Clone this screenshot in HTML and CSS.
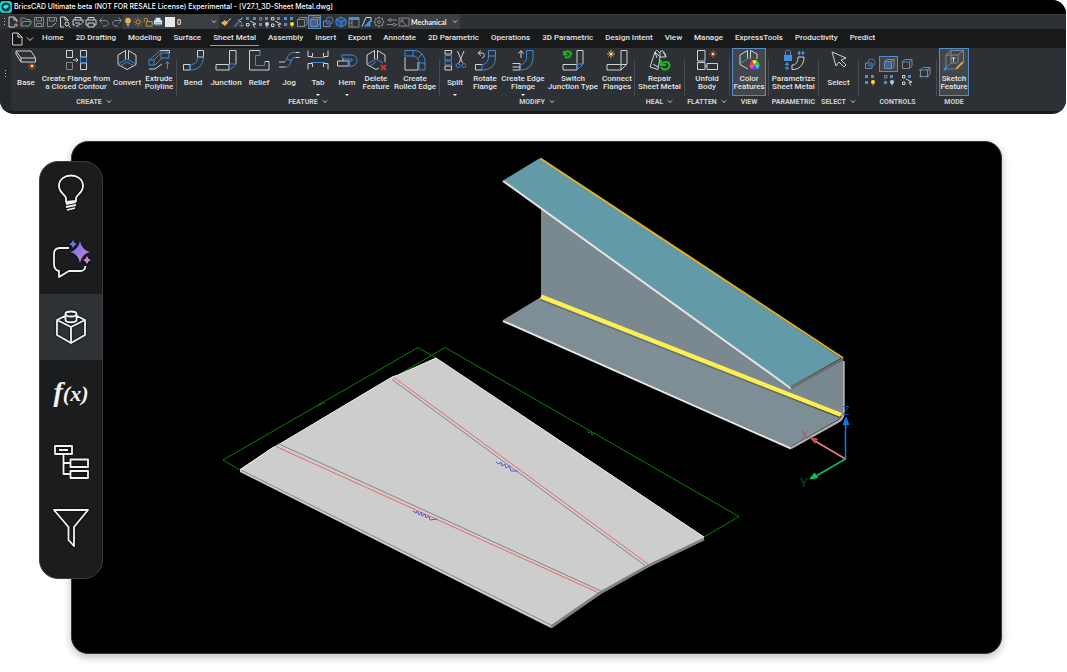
FILE: index.html
```html
<!DOCTYPE html>
<html lang="en">
<head>
<meta charset="utf-8">
<title>BricsCAD Ultimate</title>
<link rel="stylesheet" href="styles.css">
</head>
<body>
<svg class="sprite" aria-hidden="true">
  <defs>
    <linearGradient id="spark" x1="0" y1="0" x2="1" y2="1"><stop offset="0.1" stop-color="#4f7be8"/><stop offset="0.5" stop-color="#9a7bdc"/><stop offset="1" stop-color="#f08ad8"/></linearGradient>
    <symbol id="star" viewBox="0 0 8 8"><path class="star" d="M4 0V8M0 4H8M1.4 1.4L6.6 6.6M6.6 1.4L1.4 6.6"/><circle class="core" cx="4" cy="4" r="1.2"/></symbol>

    <symbol id="i-base" viewBox="0 0 22 22"><path class="w" d="M1 2H16L20.500 9V13H6L1 5ZM1 2L6 9H20.500M6 9V13"/><use href="#star" x="13" y="13" width="8" height="8"/></symbol>
    <symbol id="i-flange" viewBox="0 0 22 22"><path class="g" d="M1.500 13.500H7.500V20.500H1.500Z"/><path class="w" d="M1.500 1.500H7.500V8.500H1.500ZM15.500 1.500H21.500V8H15.500ZM15.500 14H21.500V20.500H15.500ZM8 11H13M11 9L13 11L11 13"/><path class="b" d="M15.500 8H21.500V14H15.500Z"/></symbol>
    <symbol id="i-convert" viewBox="0 0 22 22"><path class="w" d="M9.500 1.500L2 6V15.500L11 20.500L20 15.500V6L12.500 1.500V10.500M9.500 1.500V10.500"/><path class="b" d="M11 10L3 14.500M11 10L19 14.500M11 13L4 17M11 13L18 17"/></symbol>
    <symbol id="i-extrude" viewBox="0 0 22 22"><path class="b" d="M1 11H6L13 4H21V9H14L7 16H1ZM6 11V16M13 4V9M21 4L17 1.500H12L5 8L1 11M19.500 20V13M17.500 15L19.500 12.500L21.500 15"/><path class="w" d="M1 20H7L14 15M12 2L16 1.500H21.500V4"/></symbol>
    <symbol id="i-bend" viewBox="0 0 22 22"><path class="w" d="M1.500 15.500H8V21H1.500ZM15.500 1.500H21.500V8H15.500Z"/><path class="b" d="M8 15.500C13 15.500 15.500 13 15.500 8H21.500C21.500 16 16 21 8 21Z"/></symbol>
    <symbol id="i-junction" viewBox="0 0 22 22"><path class="w" d="M1 15.500H14V21H1ZM14.500 15V1.500H21V15"/><path class="b" d="M14.500 15H21V15.500L14.500 21"/></symbol>
    <symbol id="i-relief" viewBox="0 0 22 22"><path class="w" d="M12 1.500H1.500V21H21V12.500H17"/><path class="b" d="M12 1.500V6.500H7.500V16.500H16.500V12.500"/></symbol>
    <symbol id="i-jog" viewBox="0 0 22 22"><path class="w" d="M7 13H1M7 18H1M16 3.500H21.500M16 8.500H21.500"/><path class="b" d="M5 13C10 13 8 3.500 16 3.500H18M5 18H8C14 18 11 8.500 17 8.500H18M9 10L14 12"/></symbol>
    <symbol id="i-tab" viewBox="0 0 22 22"><path class="w" d="M1 1.500V7.500H5.500V4M21 1.500V7.500H16.500V4M1 20.500V14.500H5.500V18M21 20.500V14.500H16.500V18"/><path class="b" d="M4 8.500H18M4 13.500H18"/></symbol>
    <symbol id="i-hem" viewBox="0 0 22 22"><path class="w" d="M1.500 12H13V17H1.500ZM7 12V9"/><path class="b" d="M6 9V6H15C23 6 23 17 15 17H12V12H15C17 12 17 10 15 10H6"/></symbol>
    <symbol id="i-delete" viewBox="0 0 22 22"><path class="w" d="M9.500 1.500L2 6V15.500L11 20.500L14 19M12.500 1.500L20 6V13M9.500 1.500V10M12.500 1.500V10"/><path class="b" d="M11 10L3 14.500M11 10L18 14M11 13L5 17"/><path class="r" d="M16 16L21 21M21 16L16 21"/></symbol>
    <symbol id="i-rolled" viewBox="0 0 22 22"><path class="w" d="M1 8V21H14V13"/><path class="b" d="M1 7V1.500H9C17 1.500 21 7 21 13V21H15V14C15 10 12 7 9 7H1M9 1.500V7M15 14H21M14 9L18 5"/></symbol>
    <symbol id="i-split" viewBox="0 0 22 22"><path class="w" d="M1 1.500H7.500V5H1ZM1 17H7.500V21H1ZM13.500 2L18.500 14M20 2L15 14"/><path class="b" d="M1 6.500H7.500V11H1ZM1 12H7.500V16H1Z"/><circle class="b" cx="14" cy="16.500" r="2"/><circle class="b" cx="20" cy="16.500" r="2"/></symbol>
    <symbol id="i-rotate" viewBox="0 0 22 22"><path class="w" d="M8 15.500H1.500V21H8M5 4H8C11 4 11 8.500 8 9M7 1.500L4 4L7 6.500"/><path class="b" d="M8 21V15.500C12 15.500 14.500 12 14.500 8V1.500H21.500V8C21.500 16 17 21 8 21ZM14.500 7H21.500"/></symbol>
    <symbol id="i-edge" viewBox="0 0 22 22"><path class="w" d="M0.500 14.500H8V21H0.500M9 9V2M6.500 4.500L9 1.500L11.500 4.500M0.500 18H8"/><path class="b" d="M8 15.500C12 15.500 14.500 12 14.500 8V1.500H21V8C21 16 17 21 8 21"/></symbol>
    <symbol id="i-switch" viewBox="0 0 22 22"><path class="w" d="M1 15.500H15V21H1ZM15 14V1.500H21V15"/><path class="b" d="M15 14V21L21 15H15"/><path class="n" d="M2 2V5.500H5.500M2.500 5C4 1 9 2 9 5S5 9.500 3 7.500"/></symbol>
    <symbol id="i-connect" viewBox="0 0 22 22"><path class="w" d="M1 15.500H15V21H1ZM15 15.500V1.500H21V15L15 21M15 15.500H21"/><use class="gold" href="#star" x="1" y="1" width="8" height="8"/></symbol>
    <symbol id="i-repair" viewBox="0 0 22 22"><path class="w" d="M6 3L1 18L9 20.500L11 8ZM8 9L6 3C8 0 10 2 10 4M11 8V3C14 0 16 3 17 8ZM14 3L17 8M4 15L9 18"/><path class="n" d="M12 11V16H17M12.500 15.500C15 11 21 13 20.500 17S14 22 12 18"/></symbol>
    <symbol id="i-unfold" viewBox="0 0 22 22"><path class="w" d="M1.500 1.500H9V12H1.500ZM1.500 13.500H9V20.500H1.500ZM11 14.500H21.500V20.500H11ZM9 17H11"/><use href="#star" x="13" y="1" width="8" height="8"/></symbol>
    <symbol id="i-color" viewBox="0 0 22 22"><path class="w" d="M9.500 1.500L2 6V15.500L10 20M12.500 1.500L19 5V10M9.500 1.500V9M12.500 1.500V9"/><path class="b" d="M11 9L3 14M11 9L14 11"/><path fill="#f33" d="M16.500 16L11.500 16A5 5 0 0 1 14 11.700Z"/><path fill="#ee3" d="M16.500 16L14 11.700A5 5 0 0 1 19 11.700Z"/><path fill="#3c3" d="M16.500 16L19 11.700A5 5 0 0 1 21.500 16Z"/><path fill="#2cf" d="M16.500 16H21.500A5 5 0 0 1 19 20.300Z"/><path fill="#35f" d="M16.500 16L19 20.300A5 5 0 0 1 14 20.300Z"/><path fill="#f4c" d="M16.500 16L14 20.300A5 5 0 0 1 11.500 16Z"/></symbol>
    <symbol id="i-param" viewBox="0 0 22 22"><path class="w" d="M9 16V20.500C16 21 21 16 21 8H15C15 13 13 16 9 16Z"/><path class="bf" d="M1 6H9V12H1ZM14 4L17 1.500V6.500ZM22 4L19 1.500V6.500ZM4 13L1.500 16H6.500ZM4 21L1.500 18.500H6.500Z"/><path class="b" d="M2.500 6V3C2.500 0.500 7.500 0.500 7.500 3V6M15 4H21M4 15V19"/></symbol>
    <symbol id="i-select" viewBox="0 0 22 22"><path class="w" d="M4 3L18 9L13 11L18 16L16 18L11 13L8 17Z"/></symbol>
    <symbol id="i-sketch" viewBox="0 0 22 22"><path class="g" d="M8 1.500H20.500L15 6H3ZM3 6V19M15 6V14M20.500 1.500V13M8 1.500V14L3 19M8 14H14"/><path class="w" d="M10.500 13V8.500M8.500 10L10.500 8L12.500 10"/><path class="b" d="M8 14L2 20H12"/><circle class="bf" cx="2" cy="20" r="1.500"/><path class="pencil" d="M13 20L20 13"/></symbol>

    <symbol id="q-new" viewBox="0 0 12 12"><path class="w" d="M8 11H2V1H7L10 4V6M7 1V4H10"/><path class="y" d="M9 7V11M7 9H11"/></symbol>
    <symbol id="q-open" viewBox="0 0 12 12"><path class="g" d="M1 10V2H5L6 3.500H10V5M1 10L3 5.500H11.500L9 10Z"/><path class="leaf" d="M8 10.500L11 7.500"/></symbol>
    <symbol id="q-save" viewBox="0 0 12 12"><path class="g" d="M1.500 1.500H10.500V10.500H1.500ZM3.500 1.500V5H8.500V1.500M3.500 10.500V7.500H8.500V10.500"/></symbol>
    <symbol id="q-saveas" viewBox="0 0 12 12"><path class="g" d="M6 10.500H1.500V1.500H10.500V6M3.500 1.500V5H8.500V1.500"/><path class="y" d="M6 10L10 7"/></symbol>
    <symbol id="q-preview" viewBox="0 0 12 12"><path class="w" d="M5 11H1.500V1H6L9 4V5M6 1V4H9"/><circle class="w" cx="8" cy="8" r="2"/><path class="w" d="M9.500 9.500L11.500 11.500"/></symbol>
    <symbol id="q-print" viewBox="0 0 12 12"><path class="w" d="M3 4V1.500H9V4M3 9H1V4H11V9H9M3 7H9V11H3Z"/></symbol>
    <symbol id="q-plot" viewBox="0 0 12 12"><path class="w" d="M3 4V1.500H9V4M3 9H1V4H11V7M3 7H8"/><path class="y" d="M4 10L10 7.500"/><path class="b" d="M4 10.500H7"/></symbol>
    <symbol id="q-undo" viewBox="0 0 12 12"><path class="g" d="M4.500 1.500L1.500 4.500L4.500 7.500M1.500 4.500H7C11.500 4.500 11.500 10 7 10H5"/></symbol>
    <symbol id="q-redo" viewBox="0 0 12 12"><path class="g" d="M7.500 1.500L10.500 4.500L7.500 7.500M10.500 4.500H5C0.500 4.500 0.500 10 5 10H7"/></symbol>
    <symbol id="q-bulb" viewBox="0 0 12 12"><circle class="yf" cx="6" cy="4.500" r="3.500"/><path class="w" d="M4.500 9H7.500M5 11H7"/></symbol>
    <symbol id="q-sun" viewBox="0 0 12 12"><circle class="y" cx="6" cy="6" r="2.500"/><path class="y" d="M6 0.500V2M6 10V11.500M0.500 6H2M10 6H11.500M2 2L3 3M9 9L10 10M10 2L9 3M3 9L2 10"/></symbol>
    <symbol id="q-lock" viewBox="0 0 12 12"><path class="y" d="M4 5.500H11V11H4ZM5.500 5V3C5.500 1 1.500 1 1.500 3V6"/></symbol>
    <symbol id="q-layprint" viewBox="0 0 12 12"><path fill="#dfe7f2" d="M1 4H11V9H1ZM3 1H9V4H3Z"/><path class="b" d="M2 7H10M3 10H9"/></symbol>
    <symbol id="q-brush" viewBox="0 0 12 12"><path class="yf" d="M1 7L5 4L8 7L5 10Z"/><path class="w" d="M7 6L11 2.500"/></symbol>
    <symbol id="q-drop" viewBox="0 0 12 12"><path class="b" d="M1.500 10.500L7 4.500M3 11L8 5.500"/><path class="w" d="M6.500 3.500L9.500 6.500M8.500 4L10.500 1.500"/><path class="leaf" d="M9.500 7V11.500M7 9.500H12"/></symbol>
    <symbol id="q-gridsel" viewBox="0 0 12 12"><path class="bf" d="M1 1H4V4H1ZM8 1H11V4H8Z"/><path class="w" d="M1.500 7.500H4V10H1.500ZM5 5L11 8L8 8.500L10 11.500"/></symbol>
    <symbol id="q-gridoff" viewBox="0 0 12 12"><path class="g" d="M1.500 1.500H4V4H1.500Z"/><path class="bf" d="M7 1H10V4H7ZM1 7H4V10H1Z"/><circle fill="#c8ccd0" cx="9" cy="8" r="2"/><path class="w" d="M9 9V11.500"/></symbol>
    <symbol id="q-gridpick" viewBox="0 0 12 12"><path class="bf" d="M7 1H10V4H7Z"/><path class="w" d="M1.500 1.500H4V4H1.500ZM1.500 8H4V10.500H1.500ZM5 5L11 8L8 8.500L10 11.500"/></symbol>
    <symbol id="q-gridon" viewBox="0 0 12 12"><path class="bf" d="M1 1H4V4H1ZM7 1H10V4H7ZM1 7H4V10H1Z"/><circle fill="#ffe22e" cx="9" cy="8" r="2"/><path class="y" d="M9 9V11.500"/></symbol>
    <symbol id="q-cube" viewBox="0 0 12 12"><path class="g" d="M1.500 3.500H8.500V10.500H1.500ZM1.500 3.500L4 1.500H11L8.500 3.500M11 1.500V8L8.500 10.500"/></symbol>
    <symbol id="q-cubeedge" viewBox="0 0 12 12"><path class="g" d="M1.500 3.500V10.500H8.500V3.500M1.500 3.500L4 1.500H11M11 1.500V8L8.500 10.500"/><path class="b" d="M1.500 4H8.500L11 1.500"/></symbol>
    <symbol id="q-cubeblue" viewBox="0 0 12 12"><path fill="#3665a5" d="M1.500 3.500H8.500V10.500H1.500Z"/><path class="g" d="M1.500 3.500H8.500V10.500H1.500ZM1.500 3.500L4 1.500H11L8.500 3.500M11 1.500V8L8.500 10.500"/></symbol>
    <symbol id="q-circles" viewBox="0 0 12 12"><circle fill="none" stroke="#60789a" cx="7.500" cy="4.500" r="3.500"/><path class="g" d="M1.500 5H8V10.500H1.500Z"/><circle fill="#2c62a6" cx="6" cy="6.500" r="2.500"/></symbol>
    <symbol id="q-hex" viewBox="0 0 12 12"><path fill="#245083" d="M6 1L11 3.500V8.500L6 11L1 8.500V3.500Z"/><path class="b" d="M6 1L11 3.500V8.500L6 11L1 8.500V3.500ZM1 3.500L6 6L11 3.500M6 6V11"/></symbol>
    <symbol id="q-table" viewBox="0 0 12 12"><path class="g" d="M1 1.500H11V11H1ZM4 4V11M1 7H4"/><path class="bf" d="M1 1H11V4H1Z"/></symbol>
    <symbol id="q-page" viewBox="0 0 12 12"><path class="w" d="M1 10.500L5 1.500H10V6"/><path class="bf" d="M3 10.500L9.500 3.500V10.500Z"/></symbol>
    <symbol id="q-gear" viewBox="0 0 12 12"><circle class="g" cx="6" cy="6" r="4.200"/><circle class="g" cx="6" cy="6" r="1.500"/><path class="g" d="M6 0.500V2M6 10V11.500M0.500 6H2M10 6H11.500M2 2L3 3M9 9L10 10M10 2L9 3M3 9L2 10"/></symbol>
    <symbol id="q-sliders" viewBox="0 0 12 12"><path class="g" d="M1 4H3M5.500 4H11M1 8.500H7M9.500 8.500H11"/><circle class="g" cx="4.200" cy="4" r="1.300"/><circle class="g" cx="8.200" cy="8.500" r="1.300"/></symbol>
    <symbol id="q-ws" viewBox="0 0 12 12"><path class="g" d="M1 2H11V10H1ZM3 4L8 9M3 4V7M3 4H6"/></symbol>
    <symbol id="q-box" viewBox="0 0 12 12"><path class="g" d="M1.500 4H8.500V10.500H1.500ZM1.500 4L4 1.500H11L8.500 4M11 1.500V8L8.500 10.500"/><path class="bf" d="M0.500 3H2.500V5H0.500ZM7.500 3H9.500V5H7.500ZM0.500 9.500H2.500V11.500H0.500ZM7.500 9.500H9.500V11.500H7.500Z"/></symbol>
    <symbol id="chev" viewBox="0 0 6 4"><path class="chevline" d="M1 0.500L3 2.500L5 0.500"/></symbol>
  </defs>
</svg>

<header class="app">
  <div class="titlebar">
    <svg class="logo" viewBox="0 0 12 12"><rect width="12" height="12" rx="3" fill="#19cfd2"/><circle cx="6" cy="6" r="4.500" fill="#07393f"/><path d="M3 6.500C4 3 8 3 9 5.500L6 8Z" fill="#2fe3e0"/></svg>
    <span>BricsCAD Ultimate beta (NOT FOR RESALE License) Experimental - [V27.1_3D-Sheet Metal.dwg]</span>
  </div>

  <div class="quick">
    <span class="grip"></span>
    <button aria-label="New"><svg><use href="#q-new"/></svg></button>
    <button aria-label="Open"><svg><use href="#q-open"/></svg></button>
    <button aria-label="Save"><svg><use href="#q-save"/></svg></button>
    <button aria-label="Save as"><svg><use href="#q-saveas"/></svg></button>
    <button aria-label="Print preview"><svg><use href="#q-preview"/></svg></button>
    <button aria-label="Plot"><svg><use href="#q-plot"/></svg></button>
    <button aria-label="Print"><svg><use href="#q-print"/></svg></button>
    <button aria-label="Undo"><svg><use href="#q-undo"/></svg></button>
    <button aria-label="Redo"><svg><use href="#q-redo"/></svg></button>
    <div class="combo layer">
      <svg class="lay"><use href="#q-bulb"/></svg><svg class="lay"><use href="#q-sun"/></svg><svg class="lay"><use href="#q-lock"/></svg><svg class="lay"><use href="#q-layprint"/></svg>
      <span class="swatch"></span>
      <select aria-label="Layer"><option>0</option></select>
      <svg class="chev"><use href="#chev"/></svg>
    </div>
    <button aria-label="Match properties"><svg><use href="#q-brush"/></svg></button>
    <button class="tight" aria-label="Pick properties"><svg><use href="#q-drop"/></svg></button>
    <button aria-label="Isolate"><svg><use href="#q-gridsel"/></svg></button>
    <button aria-label="Hide"><svg><use href="#q-gridoff"/></svg></button>
    <button class="tight" aria-label="Select similar"><svg><use href="#q-gridpick"/></svg></button>
    <button aria-label="Show all"><svg><use href="#q-gridon"/></svg></button>
    <button aria-label="Wireframe"><svg><use href="#q-cube"/></svg></button>
    <button class="on" aria-label="Faces"><svg><use href="#q-cubeblue"/></svg></button>
    <button aria-label="Boundaries"><svg><use href="#q-circles"/></svg></button>
    <button aria-label="Solids"><svg><use href="#q-hex"/></svg></button>
    <button aria-label="Properties"><svg><use href="#q-table"/></svg></button>
    <button aria-label="Sheets"><svg><use href="#q-page"/></svg></button>
    <button class="tight" aria-label="Settings"><svg><use href="#q-gear"/></svg></button>
    <button aria-label="Options"><svg><use href="#q-sliders"/></svg></button>
    <button class="tight" aria-label="Workspace"><svg><use href="#q-ws"/></svg></button>
    <div class="combo workspace">
      <select aria-label="Workspace name"><option>Mechanical</option></select>
      <svg class="chev"><use href="#chev"/></svg>
    </div>
  </div>

  <div class="lower">
    <div class="dock"><span class="grip"></span></div>
    <div class="ribbon">
      <nav class="tabs">
        <button class="file" aria-label="File"><svg viewBox="0 0 26 14"><path class="w" d="M1.500 1H7L11 5V13H1.500ZM7 1V5H11"/><path class="w" d="M16 5.500L19 8.500L22 5.500"/></svg></button>
        <a href="#">Home</a><a href="#">2D Drafting</a><a href="#">Modeling</a><a href="#">Surface</a><a class="current" href="#">Sheet Metal</a><a href="#">Assembly</a><a href="#">Insert</a><a href="#">Export</a><a href="#">Annotate</a><a href="#">2D Parametric</a><a href="#">Operations</a><a href="#">3D Parametric</a><a href="#">Design Intent</a><a href="#">View</a><a href="#">Manage</a><a href="#">ExpressTools</a><a href="#">Productivity</a><a href="#">Predict</a>
      </nav>
      <div class="groups">
        <section class="group">
          <div class="tools create">
            <button><svg><use href="#i-base"/></svg><span>Base</span></button>
            <button><svg><use href="#i-flange"/></svg><span>Create Flange from<br>a Closed Contour</span></button>
            <button><svg><use href="#i-convert"/></svg><span>Convert</span></button>
            <button><svg><use href="#i-extrude"/></svg><span>Extrude<br>Polyline</span></button>
          </div>
          <h2>CREATE <svg class="chev"><use href="#chev"/></svg></h2>
        </section>
        <section class="group">
          <div class="tools feature">
            <button><svg><use href="#i-bend"/></svg><span>Bend</span></button>
            <button><svg><use href="#i-junction"/></svg><span>Junction</span></button>
            <button><svg><use href="#i-relief"/></svg><span>Relief</span></button>
            <button><svg><use href="#i-jog"/></svg><span>Jog</span></button>
            <button class="more"><svg><use href="#i-tab"/></svg><span>Tab</span></button>
            <button class="more"><svg><use href="#i-hem"/></svg><span>Hem</span></button>
            <button><svg><use href="#i-delete"/></svg><span>Delete<br>Feature</span></button>
            <button><svg><use href="#i-rolled"/></svg><span>Create<br>Rolled Edge</span></button>
          </div>
          <h2>FEATURE <svg class="chev"><use href="#chev"/></svg></h2>
        </section>
        <section class="group">
          <div class="tools modify">
            <button class="more"><svg><use href="#i-split"/></svg><span>Split</span></button>
            <button><svg><use href="#i-rotate"/></svg><span>Rotate<br>Flange</span></button>
            <button class="more"><svg><use href="#i-edge"/></svg><span>Create Edge<br>Flange</span></button>
            <button><svg><use href="#i-switch"/></svg><span>Switch<br>Junction Type</span></button>
            <button><svg><use href="#i-connect"/></svg><span>Connect<br>Flanges</span></button>
          </div>
          <h2>MODIFY <svg class="chev"><use href="#chev"/></svg></h2>
        </section>
        <section class="group">
          <div class="tools wide"><button><svg><use href="#i-repair"/></svg><span>Repair<br>Sheet Metal</span></button></div>
          <h2>HEAL <svg class="chev"><use href="#chev"/></svg></h2>
        </section>
        <section class="group">
          <div class="tools mid"><button><svg><use href="#i-unfold"/></svg><span>Unfold<br>Body</span></button></div>
          <h2>FLATTEN <svg class="chev"><use href="#chev"/></svg></h2>
        </section>
        <section class="group">
          <div class="tools color"><button class="on"><svg><use href="#i-color"/></svg><span>Color<br>Features</span></button></div>
          <h2>VIEW</h2>
        </section>
        <section class="group">
          <div class="tools wide"><button><svg><use href="#i-param"/></svg><span>Parametrize<br>Sheet Metal</span></button></div>
          <h2>PARAMETRIC</h2>
        </section>
        <section class="group">
          <div class="tools narrow"><button><svg><use href="#i-select"/></svg><span>Select</span></button></div>
          <h2>SELECT <svg class="chev"><use href="#chev"/></svg></h2>
        </section>
        <section class="group">
          <div class="controls">
            <div class="matrix">
              <button aria-label="Boundary mode"><svg><use href="#q-circles"/></svg></button>
              <button class="on" aria-label="Face mode"><svg><use href="#q-cubeblue"/></svg></button>
              <button aria-label="Edge mode"><svg><use href="#q-cubeedge"/></svg></button>
              <button aria-label="Show entities"><svg><use href="#q-gridon"/></svg></button>
              <button aria-label="Hide entities"><svg><use href="#q-gridoff"/></svg></button>
              <button aria-label="Isolate entities"><svg><use href="#q-gridpick"/></svg></button>
            </div>
            <button aria-label="Vertices"><svg><use href="#q-box"/></svg></button>
          </div>
          <h2>CONTROLS</h2>
        </section>
        <section class="group last">
          <div class="tools mode"><button class="on"><svg><use href="#i-sketch"/></svg><span>Sketch<br>Feature</span></button></div>
          <h2>MODE</h2>
        </section>
      </div>
    </div>
  </div>
</header>

<main class="stage">
  <div class="viewport">
    <svg class="drawing" viewBox="72 142 929 511" role="img" aria-label="Sheet metal part and its unfolded plate">
      <g class="dim">
        <path d="M240 470L223 460L418 347.500L436 358M398 375L445 347.500L739 516.500L704 537"/>
        <path d="M318 406L320 403L321 405L323 402L325 404M587 431L589 433L591 431L592 435L595 433"/>
      </g>
      <path fill="#cdcdcd" d="M436 358L704 537V540L648 567L600 594L551 628L240 472V469L272 448L278 445L392 377L398 375Z"/>
      <path fill="none" stroke="#efefef" d="M240 470L272 448L278 445L392 377L398 375L436 358L704 537"/>
      <path fill="none" stroke="#858585" d="M241 470L551 625"/>
      <path fill="none" stroke="#818181" stroke-width="3" d="M551 627L600 593L648 566L704 539"/>
      <path fill="none" stroke="#858585" d="M392 379.500L645 565.500M278 443.500L601 591"/>
      <path fill="none" stroke="#e66a66" d="M394 377.500L648 564M276 446.500L599 593"/>
      <path class="note" d="M413 511L416 513L417 511L419 515L421 512L422 516L425 514L426 518L429 516L430 520L437 519M496 462L499 464L501 462L502 466L505 464L506 468L509 466L511 471L518 471"/>

      <path fill="#7a8990" d="M541 207V297L842 416V360L790 387Z"/>
      <path fill="#7e8e97" d="M541 297L503 320L790 447L841 418Z"/>
      <path fill="none" stroke="#56636b" d="M541 300L840 418"/>
      <path fill="none" stroke="#ffee50" stroke-width="4.500" d="M541 296.500L841 415"/>
      <path fill="none" stroke="#e9e6e6" stroke-width="2" d="M503 321L791 448.500"/>
      <path fill="none" stroke="#b0b0b0" stroke-width="2.500" d="M791 448L840 420.500Q843.500 417 843.500 412V361"/>
      <path fill="#629ba7" d="M540 158L503 180.500L790 387L841 358Z"/>
      <path fill="none" stroke="#e9e3e3" stroke-width="2" d="M503 181L791 388.500"/>
      <path fill="none" stroke="#716d6d" stroke-width="3" d="M791 388L843 359"/>
      <path fill="none" stroke="#e3b02e" stroke-width="2" d="M540.500 158.500L843 358"/>

      <g fill="none" stroke-width="1.500"><path stroke="#0878ee" d="M845.500 459V422"/><path stroke="#f17d7d" d="M845.500 459L815 441"/><path stroke="#08bf5b" d="M845.500 459L816 476"/></g>
      <path fill="#0878ee" d="M846 416L842.500 425H849.500Z"/>
      <path fill="#b85455" d="M809 437L818 438.500L815 444Z"/>
      <path fill="#08c763" d="M809 479.500L814.500 472.500L818.500 478Z"/>
      <text class="axis" x="846" y="415" fill="#1a5cab">Z</text>
      <text class="axis" x="805" y="439" fill="#a65358">X</text>
      <text class="axis" x="804" y="487" fill="#087b3d">Y</text>
    </svg>
  </div>

  <nav class="side">
    <button aria-label="Tips"><svg viewBox="0 2 40 40"><path d="M15 29V25C15 22 8 20 8 13C8 -1 32 -1 32 13C32 20 25 22 25 25V28ZM15 31L25 29M15 34L25 32M16 37L24 35"/></svg></button>
    <button aria-label="Assistant"><svg viewBox="0 4 40 40"><path d="M18 11H9Q3 11 3 17V27Q3 33 8 34V40L18 34H29Q34 34 34.500 29"/><path fill="url(#spark)" stroke="none" d="M29 4Q31 13 39 15Q31 17 29 26Q27 17 19 15Q27 13 29 4ZM22 3Q23 6 26 7Q23 8 22 11Q21 8 18 7Q21 6 22 3ZM36 19Q37 22 40 23Q37 24 36 27Q35 24 32 23Q35 22 36 19Z"/></svg></button>
    <button class="active" aria-label="Components"><svg viewBox="0 0 40 40"><path d="M14 9L6 13V28L20 36L34 28V13L26 9M6 13L20 20L34 13M20 20V36M14.500 7V13C14.500 16 25.500 16 25.500 13V7"/><ellipse cx="20" cy="7" rx="5.500" ry="2.500"/></svg></button>
    <button aria-label="Parameters"><span class="fx"><b>f</b>(x)</span></button>
    <button aria-label="Structure"><svg viewBox="0 -3 40 40"><path d="M4 4H21V12H4ZM8 8H17M12.500 12V32H19.500M12.500 21H19.500M19.500 17.500H37V25H19.500ZM19.500 29H37V36H19.500Z"/></svg></button>
    <button aria-label="Filter"><svg viewBox="0 -1 40 40"><path d="M3 4H37L23 21V40L17.500 34V21Z"/></svg></button>
  </nav>
</main>
</body>
</html>
```

FILE: styles.css
```css
* { box-sizing: border-box; }
body { margin: 0; background: #fff; font-family: Roboto, "Liberation Sans", sans-serif; color: #e3e4e5; }
button { margin: 0; padding: 0; border: 0; background: none; color: inherit; font: inherit; }
.sprite { position: absolute; width: 0; height: 0; }

.w, .g, .b, .r, .n, .y, .star, .leaf, .chevline { fill: none; stroke-width: 1; }
.w, .chevline { stroke: #d0d2d3; }
.g { stroke: #84888c; }
.b { stroke: #4289d6; }
.r { stroke: #ee2929; stroke-width: 2; }
.n { stroke: #18b81c; stroke-width: 2; }
.leaf { stroke: #18b81c; }
.y { stroke: #dca64c; }
.bf { fill: #4290e0; }
.yf { fill: #e8b04e; }
.star { stroke: var(--star, #c65324); }
.gold { --star: #dca64c; }
.core { fill: #ffd29a; }
.pencil { stroke: #dfa044; stroke-width: 2; }

.app { margin-right: 1px; border-radius: 0 14px 14px 14px; overflow: hidden; background: #1b1c1f; }
.titlebar { display: flex; align-items: center; gap: 2px; height: 14px; background: #000; font: 500 7px/14px Inter, "Open Sans", sans-serif; color: #fff; white-space: nowrap; }
.logo { width: 12px; height: 12px; }

.quick { display: flex; align-items: center; height: 15px; padding-left: 3px; background: #2e3134; border-top: 1px solid #3a3d40; }
.grip { width: 3px; height: 10px; background: radial-gradient(circle, #b8babc 1px, transparent 1px) 0 0 / 3px 3px; }
.quick > button { display: grid; place-items: center; width: 13px; height: 14px; }
.quick > .tight { width: 12px; }
.quick button svg { width: 12px; height: 12px; }
.on { background: #43474b; outline: 1px solid #508dcd; outline-offset: -1px; }
.combo { position: relative; display: flex; align-items: center; height: 14px; background: #3b3e42; }
.combo select { flex: 1; min-width: 0; height: 14px; padding: 0 2px; border: 0; background: none; color: #f1f1f1; font: 700 7px/14px Lato, "Open Sans", sans-serif; appearance: none; }
.combo .chev { position: absolute; right: 2px; top: 5px; }
.layer { width: 96px; }
.layer .lay { width: 10px; height: 10px; }
.swatch { width: 10px; height: 10px; margin-left: 2px; background: #e8e8e8; }
.workspace { width: 50px; }
.workspace select { padding: 0 1px; }
.chev { width: 6px; height: 4px; }

.lower { display: flex; padding-bottom: 3px; }
.dock { display: grid; place-items: center; width: 11px; padding-top: 8px; background: #25272a; }
.ribbon { flex: 1; min-width: 0; }
.tabs { display: flex; align-items: center; gap: 6px; height: 19px; background: #18191b; font: 500 8px/14px Roboto, sans-serif; white-space: nowrap; }
.tabs a { padding: 0 3px; border-bottom: 1px solid transparent; color: #e3e4e5; text-decoration: none; }
.tabs .current { border-color: #69aced; }
.file { width: 22px; height: 14px; }
.file svg { display: block; width: 26px; height: 14px; }

.groups { display: flex; height: 63px; padding-left: 1px; background: #2d3034; border-radius: 0 0 0 3px; }
.group { position: relative; border-right: 1px solid transparent; border-image: linear-gradient(transparent 12px, #484b4f 12px, #484b4f 47px, transparent 47px) 1; }
.group.last { border: 0; }
.tools { display: grid; height: 48px; }
.create { grid-template-columns: 28px 72px 30px 34px; }
.feature { grid-template-columns: 32px 34px 32px 28px 30px 28px 30px 48px; }
.modify { grid-template-columns: 30px 30px 46px 54px 34px; }
.wide { grid-template-columns: 49px; }
.mid { grid-template-columns: 44px; }
.color { grid-template-columns: 34px; padding: 0 2px; }
.narrow { grid-template-columns: 39px; }
.mode { grid-template-columns: 30px; padding: 0 2px; }
.tools button { position: relative; display: flex; flex-direction: column; align-items: center; padding: 1px 0; }
.tools svg { flex: none; width: 22px; height: 22px; }
.tools span { margin: auto 0; font: 500 8px/8px Roboto, sans-serif; text-align: center; white-space: nowrap; }
.more::after { content: ""; position: absolute; bottom: 0; border: 2px solid transparent; border-top-color: #fff; border-bottom: 0; }
.group h2 { display: flex; align-items: center; justify-content: center; gap: 4px; margin: 0; font: 700 7px/12px Roboto, sans-serif; color: #cfd1d3; white-space: nowrap; }
.controls { display: flex; align-items: center; gap: 4px; width: 77px; height: 48px; padding-left: 1px; }
.matrix { display: grid; grid-template-columns: 19px 19px 17px; grid-auto-rows: 16px; }
.controls button { display: grid; place-items: center; }
.controls svg { width: 12px; height: 12px; }

.stage { position: relative; padding: 27px 65px 18px 71px; }
.viewport { overflow: hidden; border: 1px solid #34363d; border-radius: 17px; background: #000; box-shadow: 0 3px 8px #0004; }
.drawing { display: block; width: 100%; }
.dim { fill: none; stroke: #008400; stroke-width: 1; }
.note { fill: none; stroke: #5555e4; stroke-width: 1; }
.axis { font: 300 13px Roboto, sans-serif; text-anchor: middle; }

.side { position: absolute; left: 39px; top: 47px; width: 64px; padding-bottom: 20px; overflow: hidden; border: 1px solid #3d3e45; border-radius: 19px; background: #1b1c1e; }
.side button { display: grid; place-items: center; width: 100%; height: 66px; }
.side .active { background: #2e3235; }
.side svg { width: 40px; height: 40px; overflow: visible; fill: none; stroke: #f3f3f3; stroke-width: 1.8; stroke-linejoin: round; filter: drop-shadow(0 0 1px #000); }
.fx { font: italic 700 22px/24px "Liberation Serif", serif; color: #f3f3f3; }
.fx b { font-size: 28px; }
```
